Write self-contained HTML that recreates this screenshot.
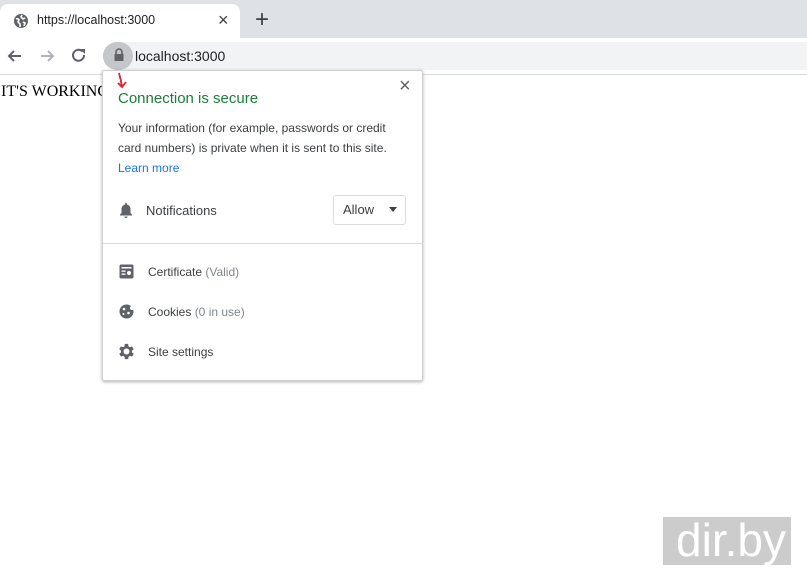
<!DOCTYPE html>
<html><head><style>
*{margin:0;padding:0;box-sizing:border-box}
body{width:807px;height:575px;position:relative;overflow:hidden;background:#fff;font-family:"Liberation Sans",sans-serif;color:#202124}
.abs{position:absolute}
.t{font-size:13px;color:#3c4043}
</style></head><body>
<div class="abs" style="left:0;top:0;width:807px;height:38px;background:#dee1e6"></div>
<div class="abs" style="left:0;top:4px;width:240px;height:36px;background:#fff;border-radius:8px 8px 0 0"></div>
<svg class="abs" style="left:13px;top:13px" width="16" height="16" viewBox="0 0 16 16"><circle cx="8" cy="8" r="7" fill="#5f6368"/><path d="M3 6 Q5 5 6 7 L5 9 L7 11 L7 14 M9 2 L8 4 L10 6 L12 5 M10 9 L12 10 L11 13" stroke="#fff" stroke-width="1.6" fill="none"/></svg>
<div class="abs t" style="left:37px;top:13px;font-size:12.5px;color:#202124">https://localhost:3000</div>
<div class="abs" style="left:218px;top:10px;font-size:18px;color:#3c4043">×</div>
<div class="abs" style="left:255px;top:6px;font-size:24px;color:#3c4043;font-weight:300">+</div>
<div class="abs" style="left:0;top:74px;width:807px;height:1px;background:#dadce0"></div>
<svg class="abs" style="left:6px;top:47px" width="18" height="18" viewBox="0 0 18 18"><path d="M15 9H3M8 4L3 9l5 5" stroke="#5f6368" stroke-width="2" fill="none"/></svg>
<svg class="abs" style="left:38px;top:47px" width="18" height="18" viewBox="0 0 18 18"><path d="M3 9h12M10 4l5 5-5 5" stroke="#b0b3b7" stroke-width="2" fill="none"/></svg>
<svg class="abs" style="left:70px;top:47px" width="18" height="18" viewBox="0 0 18 18"><path d="M14 8A5.5 5.5 0 1 1 12.5 4.5" stroke="#5f6368" stroke-width="2" fill="none"/><path d="M10 2h5v5z" fill="#5f6368"/></svg>
<div class="abs" style="left:103px;top:42px;width:704px;height:28px;background:#f1f3f4;border-radius:14px 0 0 14px"></div>
<div class="abs" style="left:103px;top:42px;width:30px;height:28px;background:#c4c6c9;border-radius:14px"></div>
<svg class="abs" style="left:113px;top:48px" width="12" height="14" viewBox="0 0 12 14"><path d="M3 6V4a3 3 0 0 1 6 0v2" stroke="#5f6368" stroke-width="1.6" fill="none"/><rect x="1.5" y="6" width="9" height="7" fill="#5f6368"/></svg>
<div class="abs" style="left:135px;top:48px;font-size:14px;color:#202124">localhost:3000</div>
<div class="abs" style="left:1px;top:83px;font-family:'Liberation Serif',serif;font-size:16px;color:#000">IT'S WORKING</div>
<div class="abs" style="left:102px;top:70px;width:321px;height:311px;background:#fff;border:1px solid #d0d0d0;box-shadow:0 1px 3px rgba(0,0,0,.3);border-radius:2px"></div>
<svg class="abs" style="left:115px;top:72px" width="14" height="18" viewBox="0 0 14 18"><path d="M4 1 Q6 8 7 15 M3 11 L7 15 L11 10" stroke="#e02030" stroke-width="1.8" fill="none"/></svg>
<div class="abs" style="left:399px;top:75px;font-size:20px;color:#5f6368">×</div>
<div class="abs" style="left:118px;top:90px;font-size:15px;color:#188038">Connection is secure</div>
<div class="abs" style="left:118px;top:118px;font-size:12px;line-height:20px;color:#3c4043;width:290px">Your information (for example, passwords or credit card numbers) is private when it is sent to this site.<br><span style="color:#1a73e8">Learn more</span></div>
<svg class="abs" style="left:119px;top:202px" width="14" height="16" viewBox="0 0 14 16"><path d="M7 1a1 1 0 0 1 1 1v.5A4.5 4.5 0 0 1 11.5 7v4l1.5 1.5v1H1v-1L2.5 11V7A4.5 4.5 0 0 1 6 2.5V2a1 1 0 0 1 1-1zM5.5 14.5h3a1.5 1.5 0 0 1-3 0z" fill="#5f6368"/></svg>
<div class="abs t" style="left:146px;top:203px">Notifications</div>
<div class="abs" style="left:333px;top:195px;width:73px;height:30px;border:1px solid #dadce0;border-radius:3px"></div>
<div class="abs t" style="left:343px;top:202px;color:#3c4043">Allow</div>
<div class="abs" style="left:389px;top:207px;width:0;height:0;border-left:4.5px solid transparent;border-right:4.5px solid transparent;border-top:5px solid #3c4043"></div>
<div class="abs" style="left:103px;top:243px;width:319px;height:1px;background:#dadce0"></div>
<svg class="abs" style="left:119px;top:264px" width="15" height="15" viewBox="0 0 15 15"><rect x="0.5" y="0.5" width="14" height="14" rx="1.5" fill="#5f6368"/><rect x="2.5" y="3" width="10" height="1.5" fill="#fff"/><rect x="2.5" y="6.5" width="4" height="1.3" fill="#fff"/><rect x="2.5" y="9.5" width="4" height="1.3" fill="#fff"/><circle cx="10" cy="9" r="2" fill="#fff"/></svg>
<div class="abs t" style="left:148px;top:265px;font-size:12px">Certificate <span style="color:#80868b">(Valid)</span></div>
<svg class="abs" style="left:119px;top:304px" width="15" height="15" viewBox="0 0 15 15"><circle cx="7.5" cy="7.5" r="7" fill="#5f6368"/><circle cx="5" cy="5" r="1.3" fill="#fff"/><circle cx="9.5" cy="9" r="1.3" fill="#fff"/><circle cx="4.5" cy="10" r="1" fill="#fff"/><circle cx="13" cy="4" r="2" fill="#fff"/></svg>
<div class="abs t" style="left:148px;top:305px;font-size:12px">Cookies <span style="color:#80868b">(0 in use)</span></div>
<svg class="abs" style="left:118px;top:343px" width="17" height="17" viewBox="3 2 20 20"><path fill="#5f6368" d="M19.4 13a7.5 7.5 0 0 0 0-2l2.1-1.6-2-3.5-2.5 1a7 7 0 0 0-1.7-1L15 3h-4l-.4 2.9a7 7 0 0 0-1.7 1l-2.5-1-2 3.5L6.6 11a7.5 7.5 0 0 0 0 2l-2.1 1.6 2 3.5 2.5-1a7 7 0 0 0 1.7 1L11 21h4l.4-2.9a7 7 0 0 0 1.7-1l2.5 1 2-3.5zM13 15.5A3.5 3.5 0 1 1 13 8.5a3.5 3.5 0 0 1 0 7z"/></svg>
<div class="abs t" style="left:148px;top:345px;font-size:12px">Site settings</div>
<div class="abs" style="left:663px;top:517px;width:128px;height:48px;background:#cccccc"></div>
<div class="abs" style="left:667px;top:511px;width:128px;text-align:center;font-size:46px;color:#fff;line-height:58px">dir.by</div>
</body></html>
